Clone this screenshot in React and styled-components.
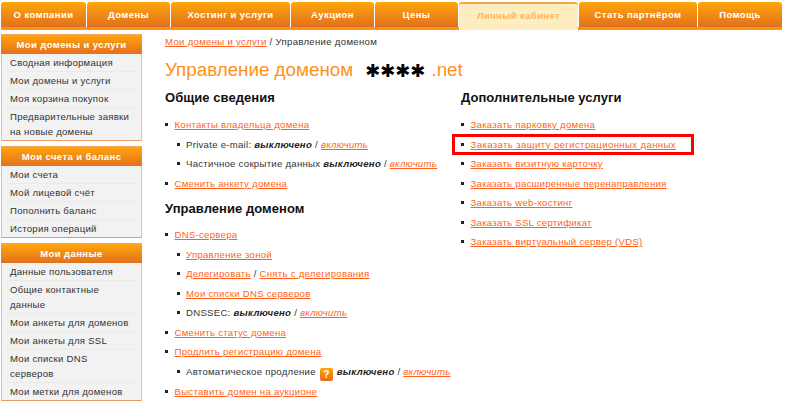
import React from 'react';
import styled, { createGlobalStyle } from 'styled-components';

const GlobalStyle = createGlobalStyle`
  html, body { margin: 0; padding: 0; background: #fff; }
  body { font-family: "Liberation Sans", Arial, sans-serif; color: #222; overflow: hidden; }
  a { color: #ff5f17; text-decoration: underline; }
`;

const Page = styled.div`
  width: 786px;
  height: 406px;
  overflow: hidden;
  padding: 2px 4px 0 1px;
  box-sizing: border-box;
`;

const Nav = styled.div`
  display: flex;
  gap: 1px;
  height: 25px;
  border-bottom: 3px solid #ff9410;
`;

const Tab = styled.div`
  width: ${p => p.w}px;
  box-sizing: border-box;
  display: flex;
  align-items: center;
  justify-content: center;
  border-radius: 3px 3px 0 0;
  font-size: 9.5px;
  font-weight: bold;
  letter-spacing: 0.4px;
  color: ${p => (p.active ? '#fcb75c' : '#fff')};
  background: ${p => (p.active ? '#fdedc0' : 'linear-gradient(#ffa60a, #e2701f)')};
  ${p => p.active && `
    border-top: 2px solid #f2a64c;
    height: 28px;
    padding-bottom: 3px;
    margin-bottom: -3px;
  `}
`;

const Body = styled.div`
  display: flex;
  margin-top: 4px;
`;

const Sidebar = styled.div`
  width: 141px;
  flex: none;
  display: flex;
  flex-direction: column;
  gap: 5px;
`;

const Panel = styled.div`
  border-right: 1px solid #efbd9c;
  border-left: 1px solid #efbd9c;
  border-bottom: 1px solid #ea9a60;
  background: #f2f2f2;
`;

const PanelTitle = styled.div`
  margin: 0 -1px;
  height: 20px;
  display: flex;
  align-items: center;
  justify-content: center;
  font-size: 9.5px;
  font-weight: bold;
  letter-spacing: 0.4px;
  color: #fff;
  background: linear-gradient(#ffa60a, #e2701f);
  border-top: 1px solid #f7a45a;
  box-sizing: border-box;
`;

const MenuItem = styled.div`
  margin: 0 5px;
  padding: 1px 4px 1px 3px;
  font-size: 9.6px;
  line-height: 15px;
  letter-spacing: 0.25px;
  color: #333;
  border-bottom: 1px solid #ebebe0;
  &:last-child { border-bottom: none; }
`;

const Main = styled.div`
  margin-left: 23px;
  flex: 1;
`;

const Crumbs = styled.div`
  padding-top: 1px;
  font-size: 9.6px;
  line-height: 14px;
  letter-spacing: 0.3px;
  color: #333;
`;

const Title = styled.h1`
  margin: 8px 0 0;
  display: flex;
  align-items: center;
  height: 26px;
  font-size: 18.8px;
  font-weight: normal;
  color: #ff9119;
`;

const Stars = styled.span`
  margin-left: 12px;
  margin-right: 6px;
  font-family: "DejaVu Sans", sans-serif;
  font-size: 18px;
  color: #000;
`;

const Columns = styled.div`
  display: flex;
`;

const Column = styled.div`
  width: ${p => p.w}px;
  flex: none;
`;

const Heading = styled.h2`
  margin: 6px 0 8px;
  font-size: 13px;
  line-height: 18px;
  font-weight: bold;
  letter-spacing: 0.05px;
  color: #111;
`;

const SubHeading = styled(Heading)`
  margin: 7px 0 7px;
`;

const List = styled.ul`
  list-style: none;
  margin: 0;
  padding: 0;
`;

const Item = styled.li`
  position: relative;
  height: 19.55px;
  padding-left: ${p => (p.sub ? 21 : 9.5)}px;
  font-size: 9.6px;
  line-height: 19.55px;
  letter-spacing: 0.27px;
  color: #333;
  white-space: nowrap;
  &::before {
    content: "";
    position: absolute;
    left: ${p => (p.sub ? 12 : 0)}px;
    top: 8px;
    width: 3px;
    height: 3px;
    background: #222;
  }
`;

// red annotation drawn over the row
const Marked = styled(Item)`
  &::after {
    content: "";
    position: absolute;
    left: -9px;
    top: -1px;
    width: 236px;
    height: 15px;
    border: 3px solid #f00;
  }
  a { letter-spacing: 0.38px; }
`;

const Off = styled.b`
  font-style: italic;
  color: #222;
`;

const Toggle = styled.a`
  font-style: italic;
`;

const Help = styled.span`
  display: inline-block;
  width: 13px;
  height: 13px;
  margin: 0 4px 0 1px;
  border-radius: 2px;
  vertical-align: -3px;
  background: linear-gradient(#ffa60a, #e56a14);
  color: #fff;
  font-size: 10px;
  font-weight: bold;
  line-height: 13px;
  text-align: center;
  letter-spacing: 0;
`;

const tabs = [
  ['О компании', 85], ['Домены', 83], ['Хостинг и услуги', 119], ['Аукцион', 83],
  ['Цены', 83], ['Личный кабинет', 119, true], ['Стать партнёром', 118], ['Помощь', 84],
];

const menus = [
  ['Мои домены и услуги', ['Сводная информация', 'Мои домены и услуги', 'Моя корзина покупок', 'Предварительные заявки на новые домены']],
  ['Мои счета и баланс', ['Мои счета', 'Мой лицевой счёт', 'Пополнить баланс', 'История операций']],
  ['Мои данные', ['Данные пользователя', 'Общие контактные данные', 'Мои анкеты для доменов', 'Мои анкеты для SSL', 'Мои списки DNS серверов', 'Мои метки для доменов']],
];

const extras = [
  'Заказать визитную карточку',
  'Заказать расширенные перенаправления',
  'Заказать web-хостинг',
  'Заказать SSL сертификат',
  'Заказать виртуальный сервер (VDS)',
];

const Status = () => (
  <>
    <Off>выключено</Off> / <Toggle href="#">включить</Toggle>
  </>
);

export default function App() {
  return (
    <Page>
      <GlobalStyle />
      <Nav>
        {tabs.map(([label, w, active]) => (
          <Tab key={label} w={w} active={active}>{label}</Tab>
        ))}
      </Nav>
      <Body>
        <Sidebar>
          {menus.map(([title, items]) => (
            <Panel key={title}>
              <PanelTitle>{title}</PanelTitle>
              {items.map(i => <MenuItem key={i}>{i}</MenuItem>)}
            </Panel>
          ))}
        </Sidebar>
        <Main>
          <Crumbs><a href="#">Мои домены и услуги</a> / Управление доменом</Crumbs>
          <Title>Управление доменом<Stars>✱✱✱✱</Stars>.net</Title>
          <Columns>
            <Column w={296}>
              <Heading>Общие сведения</Heading>
              <List>
                <Item><a href="#">Контакты владельца домена</a></Item>
                <Item sub>Private e-mail: <Status /></Item>
                <Item sub>Частичное сокрытие данных <Status /></Item>
                <Item><a href="#">Сменить анкету домена</a></Item>
              </List>
              <SubHeading>Управление доменом</SubHeading>
              <List>
                <Item><a href="#">DNS-сервера</a></Item>
                <Item sub><a href="#">Управление зоной</a></Item>
                <Item sub><a href="#">Делегировать</a> / <a href="#">Снять с делегирования</a></Item>
                <Item sub><a href="#">Мои списки DNS серверов</a></Item>
                <Item sub>DNSSEC: <Status /></Item>
                <Item><a href="#">Сменить статус домена</a></Item>
                <Item><a href="#">Продлить регистрацию домена</a></Item>
                <Item sub>Автоматическое продление <Help>?</Help><Status /></Item>
                <Item><a href="#">Выставить домен на аукционе</a></Item>
              </List>
            </Column>
            <Column w={300}>
              <Heading>Дополнительные услуги</Heading>
              <List>
                <Item><a href="#">Заказать парковку домена</a></Item>
                <Marked><a href="#">Заказать защиту регистрационных данных</a></Marked>
                {extras.map(t => <Item key={t}><a href="#">{t}</a></Item>)}
              </List>
            </Column>
          </Columns>
        </Main>
      </Body>
    </Page>
  );
}
